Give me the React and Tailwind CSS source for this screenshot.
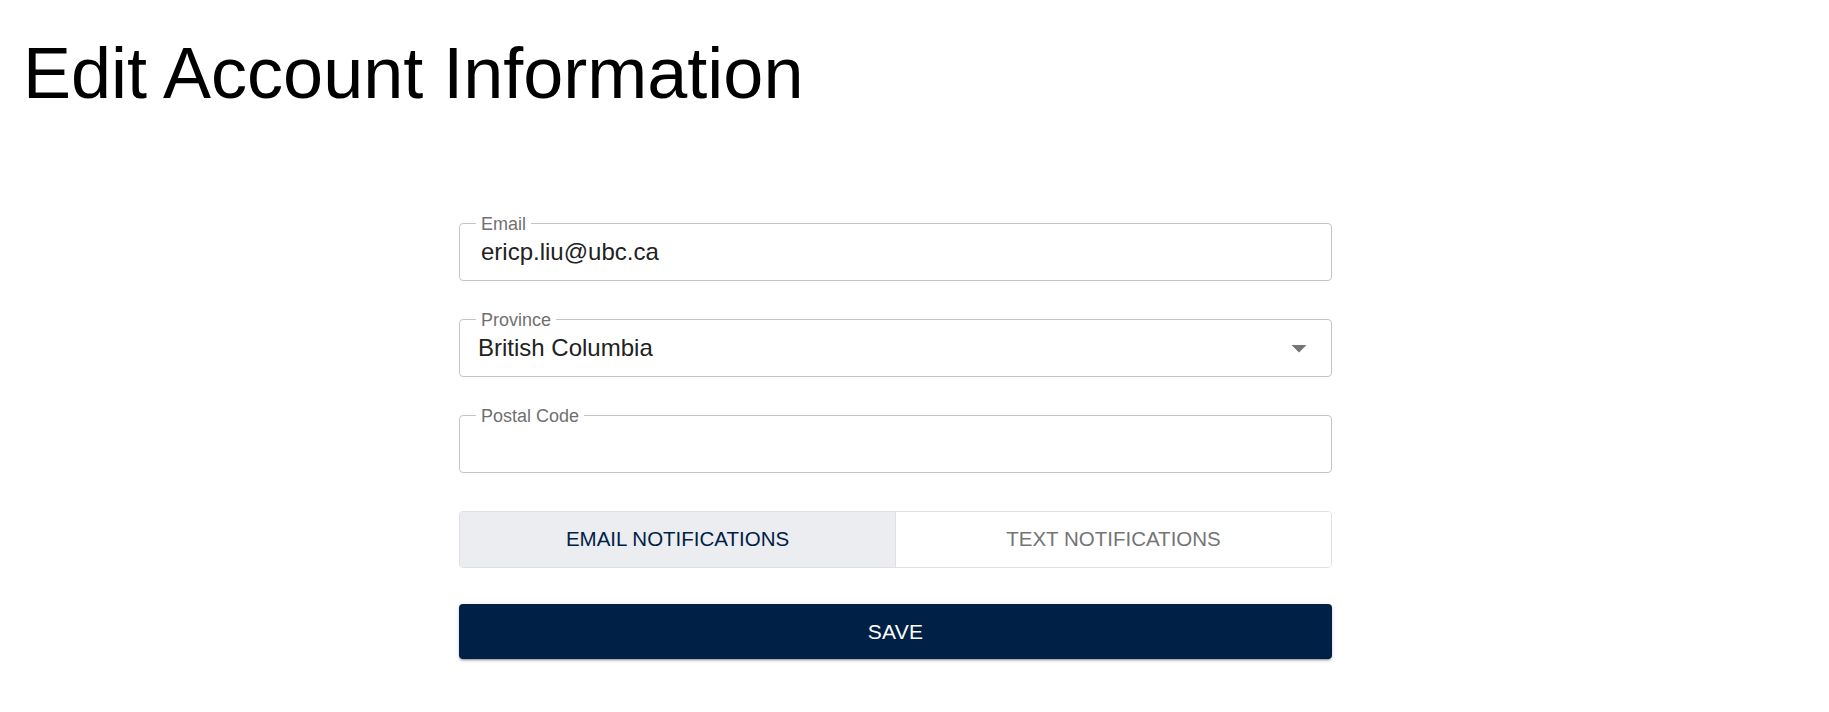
import React from "react";

function OutlinedField({ label, children }) {
  return (
    <div className="relative h-[58px] w-full rounded-[4px] border border-[#c4c4c4]">
      <span className="absolute left-[16px] top-0 -translate-y-1/2 bg-white px-[5px] text-[18px] leading-[18px] text-[#707070] whitespace-nowrap">
        {label}
      </span>
      {children}
    </div>
  );
}

export default function App() {
  return (
    <div className="min-h-screen bg-white font-['Liberation_Sans',Arial,sans-serif] text-black">
      <h1 className="pl-[23px] pt-[37px] text-[72px] leading-[72px] font-normal">
        Edit Account Information
      </h1>

      <div className="ml-[459px] mt-[114px] flex w-[873px] flex-col gap-[38px]">
        <OutlinedField label="Email">
          <input
            readOnly
            value="ericp.liu@ubc.ca"
            className="h-full w-full bg-transparent pl-[21px] pr-[21px] text-[24px] text-[#222222] outline-none"
          />
        </OutlinedField>

        <OutlinedField label="Province">
          <div className="flex h-full items-center pl-[18px] pr-[14px]">
            <span className="flex-1 text-[24px] text-[#222222]">British Columbia</span>
            <svg width="36" height="36" viewBox="0 0 24 24" className="shrink-0">
              <path d="M7 10l5 5 5-5z" fill="#757575" />
            </svg>
          </div>
        </OutlinedField>

        <OutlinedField label="Postal Code">
          <input
            readOnly
            value=""
            className="h-full w-full bg-transparent pl-[21px] pr-[21px] text-[24px] text-[#222222] outline-none"
          />
        </OutlinedField>

        <div className="flex h-[57px] w-full overflow-hidden rounded-[4px] border border-[#e0e0e0]">
          <button className="flex flex-1 items-center justify-center border-r border-[#e0e0e0] bg-[#ebedf0] text-[20.5px] uppercase text-[#002145]">
            Email Notifications
          </button>
          <button className="flex flex-1 items-center justify-center bg-white text-[20.5px] uppercase text-[#757575]">
            Text Notifications
          </button>
        </div>

        <button className="-mt-[2px] flex h-[55px] w-full items-center justify-center rounded-[4px] bg-[#002145] text-[21px] font-medium uppercase tracking-[0.3px] text-white shadow-[0_3px_1px_-2px_rgba(0,0,0,0.2),0_2px_2px_0_rgba(0,0,0,0.14),0_1px_5px_0_rgba(0,0,0,0.12)]">
          Save
        </button>
      </div>
    </div>
  );
}
